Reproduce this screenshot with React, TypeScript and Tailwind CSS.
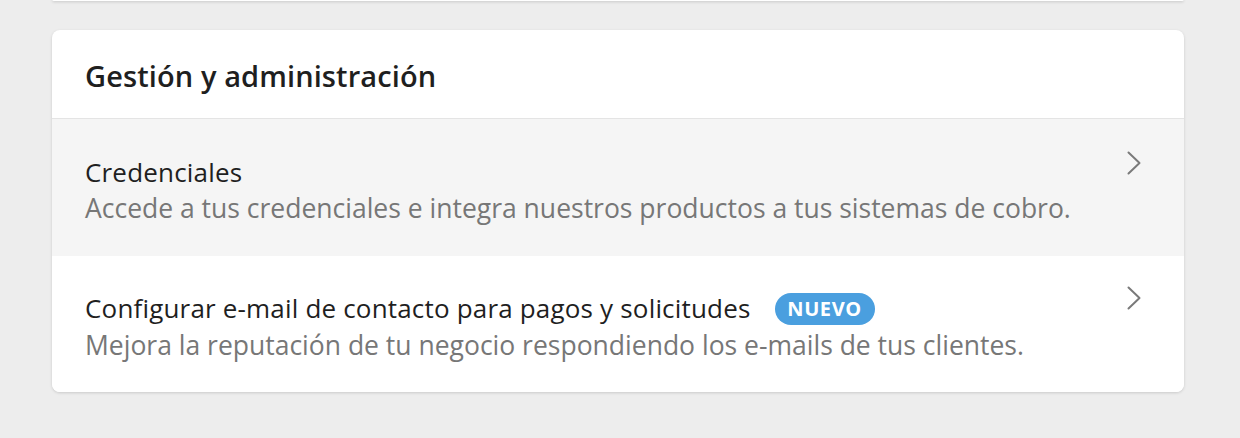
import React from 'react';

const Chevron: React.FC = () => (
  <svg width="16" height="24" viewBox="0 0 16 24" fill="none" className="shrink-0">
    <path d="M2.5 1.5 L13.5 12 L2.5 22.5" stroke="#7a7a7a" strokeWidth="2" strokeLinecap="round" strokeLinejoin="round" />
  </svg>
);

type Item = {
  title: string;
  description: string;
  badge?: string;
  active?: boolean;
};

const items: Item[] = [
  {
    title: 'Credenciales',
    description: 'Accede a tus credenciales e integra nuestros productos a tus sistemas de cobro.',
    active: true,
  },
  {
    title: 'Configurar e-mail de contacto para pagos y solicitudes',
    description: 'Mejora la reputación de tu negocio respondiendo los e-mails de tus clientes.',
    badge: 'NUEVO',
  },
];

const App: React.FC = () => {
  return (
    <div
      className="min-h-screen h-[438px] bg-[#ededed] overflow-hidden"
      style={{ fontFamily: '"Open Sans", "Liberation Sans", sans-serif' }}
    >
      <div className="mx-[52px] w-[1132px] h-[2px] bg-white rounded-b-lg shadow-[0_1px_3px_rgba(0,0,0,0.18)] -mt-px" />
      <div className="mx-[52px] w-[1132px] mt-[29px] bg-white rounded-lg shadow-[0_1px_3px_rgba(0,0,0,0.15)] overflow-hidden">
        <div className="h-[89px] px-[33px] pt-[26px] border-b border-[#e4e4e4]">
          <h2 className="text-[29px] leading-[40px] font-semibold text-[#1f1f1f] tracking-[0.1px]">Gestión y administración</h2>
        </div>
        {items.map((item) => (
          <div
            key={item.title}
            className={`pl-[33px] pr-[42px] flex items-start justify-between ${
              item.active ? 'h-[137px] pt-[37px] bg-[#f5f5f5]' : 'h-[136px] pt-[35px] bg-white'
            }`}
          >
            <div>
              <div className="flex items-center gap-[24px]">
                <span className="text-[26px] leading-[32px] tracking-[0.18px] text-[#1f1f1f]">{item.title}</span>
                {item.badge && (
                  <span className="h-[32px] w-[100px] mt-[2px] rounded-full bg-[#4a9fdf] text-white text-[20px] font-bold flex items-center justify-center tracking-[0.6px]">
                    {item.badge}
                  </span>
                )}
              </div>
              <p className="text-[26.5px] leading-[40px] text-[#777777]">{item.description}</p>
            </div>
            <div className="-mt-[5px]">
              <Chevron />
            </div>
          </div>
        ))}
      </div>
    </div>
  );
};

export default App;
